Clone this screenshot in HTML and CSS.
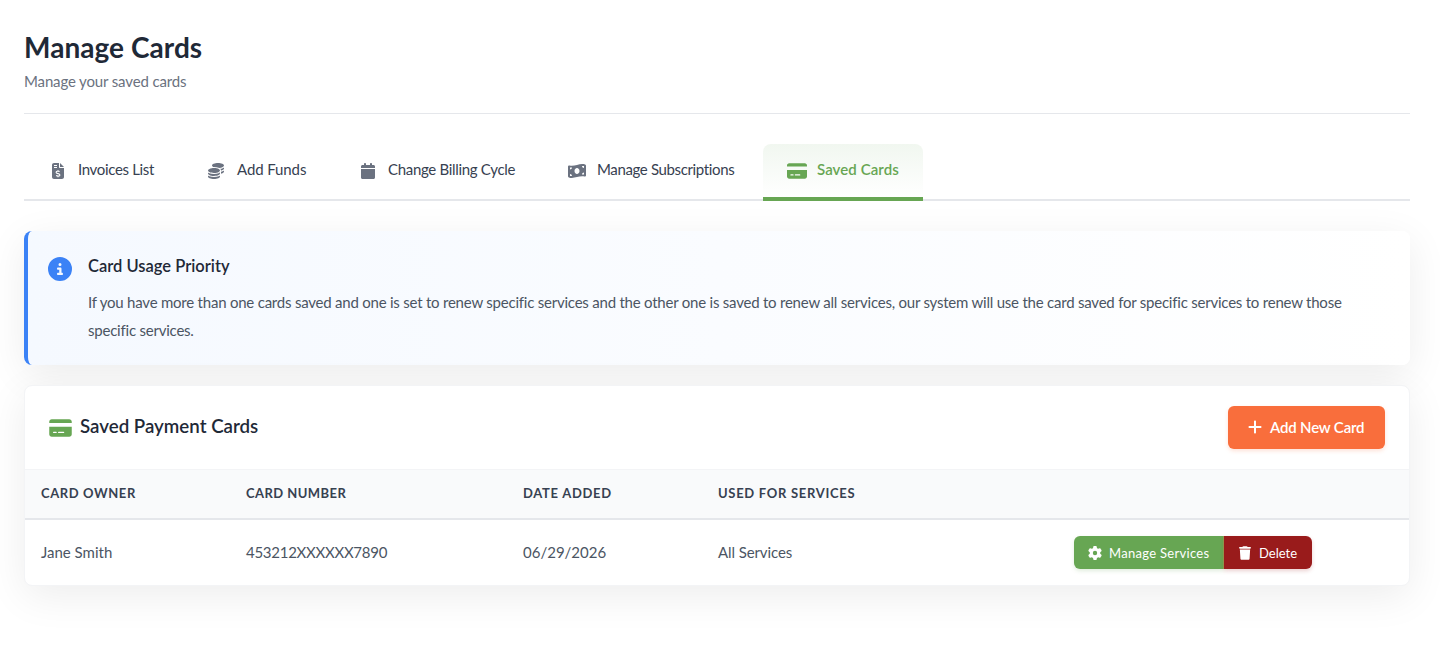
FILE: index.html
```html
<!DOCTYPE html>
<html lang="en">
<head>
  <meta charset="UTF-8">
  <meta name="viewport" content="width=device-width, initial-scale=1.0">
  <title>Manage Cards</title>
  <link rel="stylesheet" href="styles.css">
</head>
<body>
  <header class="page-header">
    <h1>Manage Cards</h1>
    <p>Manage your saved cards</p>
  </header>

  <nav class="tabs">
    <a class="tab tab-invoices" href="#">
      <span class="tab-icon"><svg width="12" height="16" viewBox="0 0 384 512"><path fill-rule="evenodd" d="M64 0C28.7 0 0 28.7 0 64V448c0 35.3 28.7 64 64 64H320c35.3 0 64-28.7 64-64V160H256c-17.7 0-32-14.3-32-32V0H64zM256 0V128H384L256 0zM64 64h96v32H64zM64 128h96v32H64z"/><path class="dollar" d="M244 274c-60-26-112-12-112 27 0 49 120 29 120 80 0 40-60 52-120 22M192 230v42M192 410v42"/></svg></span>
      <span class="tab-text">Invoices List</span>
    </a>
    <a class="tab tab-funds" href="#">
      <span class="tab-icon"><svg width="16" height="16" viewBox="0 0 512 512"><path d="M512 80c0 18-14.3 34.6-38.4 48c-29.1 16.1-72.5 27.5-122.3 30.9c-3.7-1.8-7.4-3.5-11.3-5C300.6 137.4 248.2 128 192 128c-8.3 0-16.4 .2-24.5 .6l-1.1-.6C142.3 114.6 128 98 128 80c0-44.2 86-80 192-80S512 35.8 512 80zM160.7 161.1c10.2-.7 20.7-1.1 31.3-1.1c62.2 0 117.4 12.3 152.5 31.4C369.3 204.9 384 221.7 384 240c0 4-.7 7.9-2.1 11.7c-4.6 13.2-17 25.3-35 35.5c-.4 .2-.9 .5-1.3 .7c-35 19.4-90.8 32-153.6 32c-59.6 0-112.9-11.3-148.2-29.1c-1.9-.9-3.7-1.9-5.5-2.9C14.3 274.6 0 258 0 240c0-34.8 53.4-64.5 128-75.4c10.5-1.5 21.4-2.7 32.7-3.5zM416 240c0-21.9-10.6-39.9-24.1-53.4c28.3-4.4 54.2-11.4 76.2-20.5c16.3-6.8 31.5-15.2 43.9-25.5V176c0 19.3-16.5 37.1-43.8 50.9c-14.6 7.4-32.4 13.7-52.4 18.5c.1-1.8 .2-3.5 .2-5.3zm-32 96c0 18-14.3 34.6-38.4 48c-1.8 1-3.6 1.9-5.5 2.9C304.9 404.7 251.6 416 192 416c-62.8 0-118.6-12.6-153.6-32C14.3 370.6 0 354 0 336V300.6c12.5 10.3 27.6 18.7 43.9 25.5C83.4 342.6 135.8 352 192 352s108.6-9.4 148.1-25.9c7.8-3.2 15.3-6.9 22.4-10.9c6.1-3.4 11.8-7.2 17.2-11.2c1.5-1.1 2.9-2.3 4.3-3.4V336zm32 0V278.1c19-4.2 36.5-9.5 52.1-16c16.3-6.8 31.5-15.2 43.9-25.5V272c0 10.5-5 21-14.9 30.9c-16.3 16.3-45 29.7-81.3 38.4c.1-1.7 .2-3.5 .2-5.3zM192 448c56.2 0 108.6-9.4 148.1-25.9c16.3-6.8 31.5-15.2 43.9-25.5V432c0 44.2-86 80-192 80S0 476.2 0 432V396.6c12.5 10.3 27.6 18.7 43.9 25.5C83.4 438.6 135.8 448 192 448z"/></svg></span>
      <span class="tab-text">Add Funds</span>
    </a>
    <a class="tab tab-cycle" href="#">
      <span class="tab-icon"><svg width="14" height="16" viewBox="0 0 448 512"><path d="M96 32V64H48C21.5 64 0 85.5 0 112v48H448V112c0-26.5-21.5-48-48-48H352V32c0-17.7-14.3-32-32-32s-32 14.3-32 32V64H160V32c0-17.7-14.3-32-32-32S96 14.3 96 32zM448 192H0V464c0 26.5 21.5 48 48 48H400c26.5 0 48-21.5 48-48V192z"/></svg></span>
      <span class="tab-text">Change Billing Cycle</span>
    </a>
    <a class="tab tab-subs" href="#">
      <span class="tab-icon"><svg width="18" height="16" viewBox="0 0 576 512"><path d="M0 112.5V422.3c0 18 10.1 35 27 41.3c87 32.5 174 10.3 261-11.9c79.8-20.3 159.6-40.7 239.3-18.9c23 6.3 48.7-9.5 48.7-33.4V89.7c0-18-10.1-35-27-41.3C462 15.9 375 38.1 288 60.3C208.2 80.6 128.4 100.9 48.7 79.1C25.6 72.8 0 88.6 0 112.5zM288 352c-44.2 0-80-43-80-96s35.8-96 80-96s80 43 80 96s-35.8 96-80 96zM64 352c35.3 0 64 28.7 64 64H64V352zm64-208c0 35.3-28.7 64-64 64V144h64zM512 304v64H448c0-35.3 28.7-64 64-64zM448 96h64v64c-35.3 0-64-28.7-64-64z"/></svg></span>
      <span class="tab-text">Manage Subscriptions</span>
    </a>
    <a class="tab tab-cards active" href="#">
      <span class="tab-icon"><svg width="20" height="18" viewBox="0 0 576 512"><path d="M64 32C28.7 32 0 60.7 0 96v32H576V96c0-35.3-28.7-64-64-64H64zM576 224H0V416c0 35.3 28.7 64 64 64H512c35.3 0 64-28.7 64-64V224zM112 352h64c8.8 0 16 7.2 16 16s-7.2 16-16 16H112c-8.8 0-16-7.2-16-16s7.2-16 16-16zm112 16c0-8.8 7.2-16 16-16H368c8.8 0 16 7.2 16 16s-7.2 16-16 16H240c-8.8 0-16-7.2-16-16z"/></svg></span>
      <span class="tab-text">Saved Cards</span>
    </a>
  </nav>

  <section class="info-box">
    <svg class="info-icon" width="24" height="24" viewBox="0 0 512 512"><path d="M256 512A256 256 0 1 0 256 0a256 256 0 1 0 0 512zM216 336h24V272H216c-13.3 0-24-10.7-24-24s10.7-24 24-24h48c13.3 0 24 10.7 24 24v88h8c13.3 0 24 10.7 24 24s-10.7 24-24 24H216c-13.3 0-24-10.7-24-24s10.7-24 24-24zm40-208a32 32 0 1 1 0 64 32 32 0 1 1 0-64z"/></svg>
    <div class="info-content">
      <h3>Card Usage Priority</h3>
      <p>If you have more than one cards saved and one is set to renew specific services and the other one is saved to renew all services, our system will use the card saved for specific services to renew those<br>specific services.</p>
    </div>
  </section>

  <section class="cards-panel">
    <div class="panel-header">
      <h2>
        <svg width="23" height="20" viewBox="0 0 576 512"><path d="M64 32C28.7 32 0 60.7 0 96v32H576V96c0-35.3-28.7-64-64-64H64zM576 224H0V416c0 35.3 28.7 64 64 64H512c35.3 0 64-28.7 64-64V224zM112 352h64c8.8 0 16 7.2 16 16s-7.2 16-16 16H112c-8.8 0-16-7.2-16-16s7.2-16 16-16zm112 16c0-8.8 7.2-16 16-16H368c8.8 0 16 7.2 16 16s-7.2 16-16 16H240c-8.8 0-16-7.2-16-16z"/></svg>
        <span>Saved Payment Cards</span>
      </h2>
      <button class="btn-add">
        <svg width="14" height="16" viewBox="0 0 448 512"><path d="M256 80c0-17.7-14.3-32-32-32s-32 14.3-32 32V224H48c-17.7 0-32 14.3-32 32s14.3 32 32 32H192V432c0 17.7 14.3 32 32 32s32-14.3 32-32V288H400c17.7 0 32-14.3 32-32s-14.3-32-32-32H256V80z"/></svg>
        <span>Add New Card</span>
      </button>
    </div>
    <table class="cards-table">
      <thead>
        <tr>
          <th class="col-owner">Card Owner</th>
          <th class="col-number">Card Number</th>
          <th class="col-date">Date Added</th>
          <th class="col-services">Used for Services</th>
          <th></th>
        </tr>
      </thead>
      <tbody>
        <tr>
          <td class="cell-owner">Jane Smith</td>
          <td class="cell-number">453212XXXXXX7890</td>
          <td class="cell-date">06/29/2026</td>
          <td class="cell-services">All Services</td>
          <td class="cell-actions">
            <div class="btn-group">
              <button class="btn-manage">
                <svg width="14" height="14" viewBox="0 0 512 512"><path d="M495.9 166.6c3.2 8.7 .5 18.4-6.4 24.6l-43.3 39.4c1.1 8.3 1.7 16.8 1.7 25.4s-.6 17.1-1.7 25.4l43.3 39.4c6.9 6.2 9.6 15.9 6.4 24.6c-4.4 11.9-9.7 23.3-15.8 34.3l-4.7 8.1c-6.6 11-14 21.4-22.1 31.2c-5.9 7.2-15.7 9.6-24.5 6.8l-55.7-17.7c-13.4 10.3-28.2 18.9-44 25.4l-12.5 57.1c-2 9.1-9 16.3-18.2 17.8c-13.8 2.3-28 3.5-42.5 3.5s-28.7-1.2-42.5-3.5c-9.2-1.5-16.2-8.7-18.2-17.8l-12.5-57.1c-15.8-6.5-30.6-15.1-44-25.4L83.1 425.9c-8.8 2.8-18.6 .3-24.5-6.8c-8.1-9.8-15.5-20.2-22.1-31.2l-4.7-8.1c-6.1-11-11.4-22.4-15.8-34.3c-3.2-8.7-.5-18.4 6.4-24.6l43.3-39.4C64.6 273.1 64 264.6 64 256s.6-17.1 1.7-25.4L22.4 191.2c-6.9-6.2-9.6-15.9-6.4-24.6c4.4-11.9 9.7-23.3 15.8-34.3l4.7-8.1c6.6-11 14-21.4 22.1-31.2c5.9-7.2 15.7-9.6 24.5-6.8l55.7 17.7c13.4-10.3 28.2-18.9 44-25.4l12.5-57.1c2-9.1 9-16.3 18.2-17.8C227.3 1.2 241.5 0 256 0s28.7 1.2 42.5 3.5c9.2 1.5 16.2 8.7 18.2 17.8l12.5 57.1c15.8 6.5 30.6 15.1 44 25.4l55.7-17.7c8.8-2.8 18.6-.3 24.5 6.8c8.1 9.8 15.5 20.2 22.1 31.2l4.7 8.1c6.1 11 11.4 22.4 15.8 34.3zM256 336a80 80 0 1 0 0-160 80 80 0 1 0 0 160z"/></svg>
                <span>Manage Services</span>
              </button>
              <button class="btn-delete">
                <svg width="12" height="14" viewBox="0 0 448 512"><path d="M135.2 17.7L128 32H32C14.3 32 0 46.3 0 64S14.3 96 32 96H416c17.7 0 32-14.3 32-32s-14.3-32-32-32H320l-7.2-14.3C307.4 6.8 296.3 0 284.2 0H163.8c-12.1 0-23.2 6.8-28.6 17.7zM416 128H32L53.2 467c1.6 25.3 22.6 45 47.9 45H346.9c25.3 0 46.3-19.7 47.9-45L416 128z"/></svg>
                <span>Delete</span>
              </button>
            </div>
          </td>
        </tr>
      </tbody>
    </table>
  </section>
</body>
</html>
```

FILE: styles.css
```css
* {
  box-sizing: border-box;
}
body {
  margin: 0;
  min-height: 100vh;
  padding: 29px 30px 0 24px;
  font-family: Lato, "Open Sans", sans-serif;
  font-size: 15px;
  color: #4b5563;
  background: #fff;
}
h1, h2, h3, p {
  margin: 0;
}
svg {
  fill: currentColor;
  flex-shrink: 0;
}
button {
  font-family: inherit;
  border: none;
  color: #fff;
  cursor: pointer;
  white-space: nowrap;
}

.page-header {
  height: 85px;
  border-bottom: 1px solid #e5e7eb;
}
.page-header h1 {
  font-size: 28px;
  line-height: 36px;
  font-weight: 700;
  letter-spacing: 0.05px;
  color: #1f2937;
}
.page-header p {
  margin-top: 5px;
  line-height: 22px;
  letter-spacing: -0.14px;
  color: #6b7280;
}

.tabs {
  display: flex;
  gap: 4px;
  height: 57px;
  margin-top: 30px;
  box-shadow: inset 0 -2px #e5e7eb;
}
.tab {
  display: flex;
  align-items: center;
  gap: 10px;
  padding: 0 24px 4px;
  border-radius: 8px 8px 0 0;
  color: #374151;
  text-decoration: none;
  white-space: nowrap;
}
.tab-invoices { width: 154px; letter-spacing: -0.34px; }
.tab-funds { width: 148px; gap: 11px; letter-spacing: -0.1px; }
.tab-cycle { width: 205px; letter-spacing: -0.31px; }
.tab-subs { width: 216px; letter-spacing: -0.36px; }
.tab-cards { width: 160px; letter-spacing: 0.08px; }
.tab-icon {
  display: flex;
  flex-shrink: 0;
  justify-content: center;
  width: 20px;
  padding-top: 1px;
  color: #6b7280;
}
.tab-text {
  padding-bottom: 3px;
}
.dollar {
  fill: none;
  stroke: #fff;
  stroke-width: 36;
}
.tab.active {
  padding-bottom: 0;
  border-bottom: 4px solid #67a653;
  background: linear-gradient(#f1f7f0, #fff);
  color: #67a653;
  font-weight: 600;
}
.tab.active .tab-icon {
  color: #67a653;
}

.info-box {
  display: flex;
  gap: 16px;
  height: 134px;
  margin-top: 30px;
  padding: 20px;
  border-left: 4px solid #3b82f6;
  border-radius: 8px;
  background: linear-gradient(90deg, #f5f9ff, #fff);
  box-shadow: 0 10px 40px rgba(0, 0, 0, 0.075);
}
.info-icon {
  margin-top: 6px;
  color: #3b82f6;
}
.info-content h3 {
  font-size: 16.5px;
  line-height: 30px;
  font-weight: 600;
  color: #1f2937;
}
.info-content p {
  margin-top: 7px;
  line-height: 28px;
  letter-spacing: -0.22px;
  white-space: nowrap;
}

.cards-panel {
  height: 201px;
  margin-top: 20px;
  border: 1px solid #f3f4f6;
  border-radius: 8px;
  background: #fff;
  box-shadow: 0 10px 40px rgba(0, 0, 0, 0.075);
}
.panel-header {
  display: flex;
  justify-content: space-between;
  align-items: center;
  height: 84px;
  padding: 0 24px;
  border-bottom: 1px solid #f3f4f6;
}
.panel-header h2 {
  display: flex;
  align-items: center;
  gap: 8px;
  font-size: 18.7px;
  font-weight: 600;
  color: #1f2937;
}
.panel-header h2 svg {
  color: #67a653;
}
.panel-header h2 span {
  padding-bottom: 3px;
}
.btn-add {
  display: flex;
  align-items: center;
  gap: 8px;
  width: 157px;
  height: 43px;
  padding: 0 20px 2px;
  border-radius: 6px;
  background: #f96e3c;
  font-size: 15px;
  font-weight: 600;
  letter-spacing: -0.18px;
  box-shadow: 0 2px 4px rgba(249, 110, 60, 0.2);
}

.cards-table {
  width: 100%;
  table-layout: fixed;
  border-collapse: separate;
  border-spacing: 0;
}
.cards-table th,
.cards-table td {
  padding: 0 16px 2px;
  text-align: left;
}
.cards-table th {
  height: 50px;
  border-bottom: 2px solid #e5e7eb;
  background: #f9fafb;
  font-size: 13px;
  font-weight: 700;
  color: #374151;
  text-transform: uppercase;
}
.cards-table td {
  height: 65px;
}
.cards-table .cell-actions {
  padding-bottom: 0;
}
.col-owner { width: 205px; letter-spacing: 0.6px; }
.col-number { width: 277px; letter-spacing: 0.45px; }
.col-date { width: 195px; letter-spacing: 0.7px; }
.col-services { width: 356px; letter-spacing: 0.7px; }
.cell-number { letter-spacing: -0.27px; }
.cell-services { letter-spacing: -0.1px; }

.btn-group {
  display: flex;
}
.btn-group button {
  display: flex;
  align-items: center;
  height: 33px;
  padding: 0 14px 0 15px;
  font-size: 13px;
}
.btn-group .btn-manage {
  gap: 7px;
  width: 150px;
  padding-left: 14px;
  border-right: 1px solid #8fa04f;
  border-radius: 6px 0 0 6px;
  background: #67a653;
  letter-spacing: 0.3px;
  box-shadow: 0 2px 4px rgba(103, 166, 83, 0.2);
}
.btn-group .btn-delete {
  gap: 8px;
  width: 88px;
  border-radius: 0 6px 6px 0;
  background: #991b1b;
  box-shadow: 0 2px 4px rgba(153, 27, 27, 0.2);
}
```
